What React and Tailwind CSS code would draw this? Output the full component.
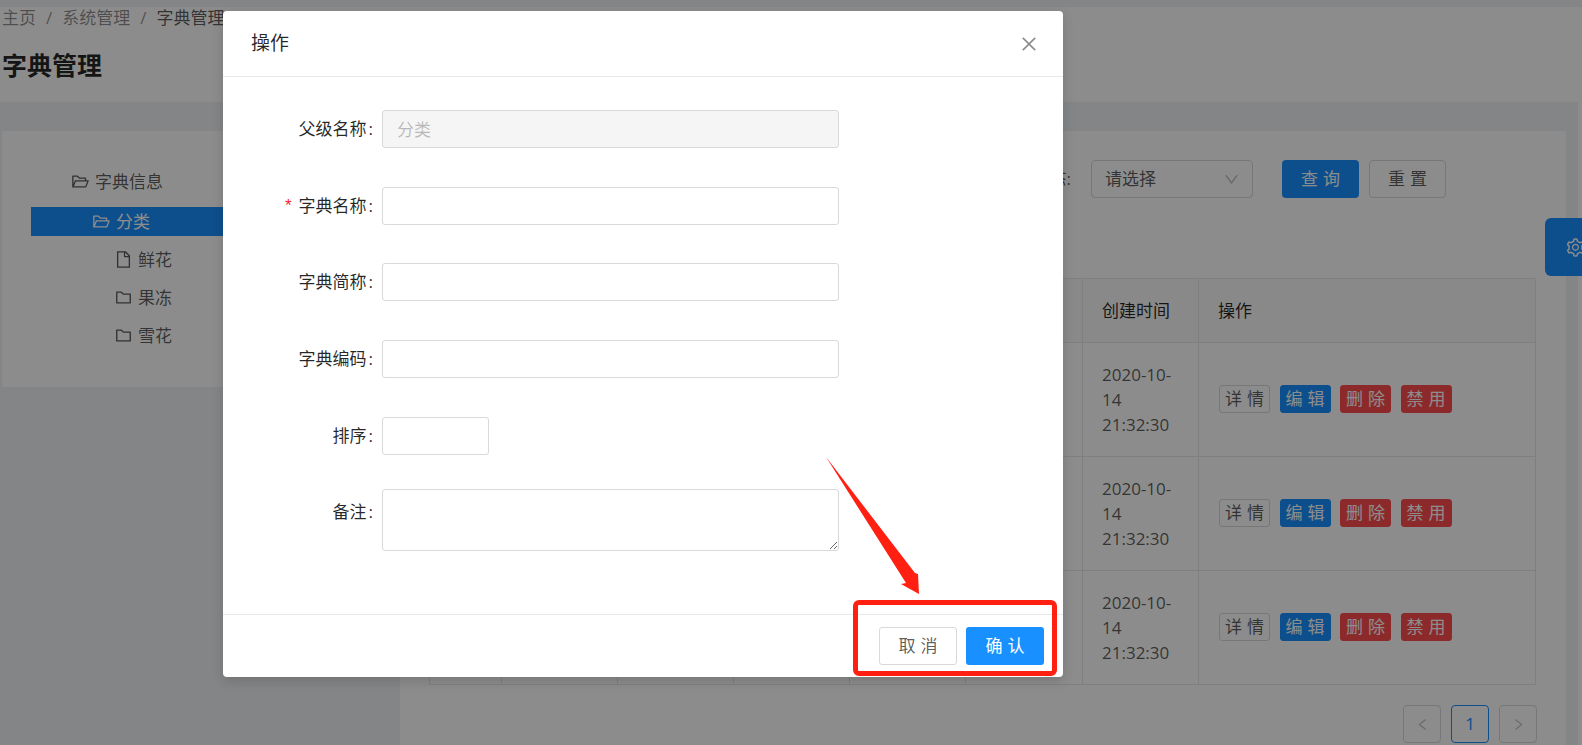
import React from 'react';
import {
  AiOutlineClose,
  AiOutlineDown,
  AiOutlineFile,
  AiOutlineFolder,
  AiOutlineFolderOpen,
  AiOutlineLeft,
  AiOutlineRight,
  AiOutlineSetting,
} from 'react-icons/ai';

const rows = [1, 2, 3];

const Spaced = ({ children }) => (
  <span className="tracking-[0.3em] -mr-[0.3em]">{children}</span>
);

const ActionButton = ({ label, className }) => (
  <button className={`flex h-[28px] w-[51px] items-center justify-center rounded-[3px] border ${className}`}>
    <Spaced>{label}</Spaced>
  </button>
);

const TreeRow = ({ icon, label, className = '' }) => (
  <div className={`flex h-[29px] items-center gap-[5px] ${className}`}>
    {icon}
    <span>{label}</span>
  </div>
);

const FormRow = ({ label, required, className = '', labelClass = '', children }) => (
  <div className={`flex items-start ${className}`}>
    <label className={`flex h-[38px] w-[159px] items-center justify-end text-black/85 ${labelClass}`}>
      {required && (
        <span className="mr-[5px] mt-[3px] text-[17px] text-[#f5222d] [font-family:'Liberation_Mono',monospace]">*</span>
      )}
      {label}
      <span className="ml-[2px] mr-[9px]">:</span>
    </label>
    {children}
  </div>
);

const inputBase = 'h-[38px] rounded-[3px] border border-[#d9d9d9] px-[14px] pb-[2px] outline-none';

const App = () => {
  return (
    <div className="relative h-[745px] w-[1582px] overflow-hidden bg-[#f0f2f5] text-[17px] text-black/65 [font-family:'Open_Sans','Noto_Sans_CJK_SC',sans-serif]">
      {/* page header */}
      <div className="mt-[7px] h-[95px] bg-white pl-[2px] pt-[1px]">
        <div className="flex h-[20px] items-center text-black/45">
          <span>主页</span>
          <span className="mx-[10px]">/</span>
          <span>系统管理</span>
          <span className="mx-[10px]">/</span>
          <span className="text-black/65">字典管理</span>
        </div>
        <h1 className="mt-[20px] text-[25px] font-semibold leading-[34px] text-black/85">字典管理</h1>
      </div>

      <div className="flex h-[643px]">
        {/* tree */}
        <div className="w-[400px] pl-[2px] pt-[29px]">
          <div className="flex h-[256px] w-[388px] flex-col gap-[9px] bg-white pl-[29px] pt-[36px]">
            <TreeRow className="mb-[2px] pl-[40px]" icon={<AiOutlineFolderOpen className="text-[19px]" />} label="字典信息" />
            <TreeRow className="bg-[#1890ff] pl-[61px] text-white" icon={<AiOutlineFolderOpen className="text-[19px]" />} label="分类" />
            <TreeRow className="pl-[83px]" icon={<AiOutlineFile className="text-[19px]" />} label="鲜花" />
            <TreeRow className="pl-[83px]" icon={<AiOutlineFolder className="text-[19px]" />} label="果冻" />
            <TreeRow className="pl-[83px]" icon={<AiOutlineFolder className="text-[19px]" />} label="雪花" />
          </div>
        </div>

        {/* list */}
        <div className="mt-[29px] h-[614px] w-[1166px] bg-white pl-[29px] pt-[29px]">
          <div className="flex h-[38px] items-center justify-end pr-[120px]">
            <span>状态:</span>
            <div className="ml-[20px] flex h-[38px] w-[162px] items-center justify-between rounded-[4px] border border-[#d9d9d9] pl-[13px] pr-[12px]">
              <span>请选择</span>
              <AiOutlineDown className="text-[17px] text-black/25" />
            </div>
            <button className="ml-[29px] flex h-[38px] w-[77px] items-center justify-center rounded-[4px] bg-[#1890ff] text-white">
              <Spaced>查询</Spaced>
            </button>
            <button className="ml-[10px] flex h-[38px] w-[77px] items-center justify-center rounded-[4px] border border-[#d9d9d9]">
              <Spaced>重置</Spaced>
            </button>
          </div>

          <table className="mt-[80px] w-[1106px] table-fixed border-collapse">
            <colgroup>
              <col className="w-[72px]" />
              <col className="w-[116px]" />
              <col className="w-[116px]" />
              <col className="w-[116px]" />
              <col className="w-[116px]" />
              <col className="w-[117px]" />
              <col className="w-[116px]" />
              <col className="w-[337px]" />
            </colgroup>
            <thead className="bg-[#fafafa] text-black/85">
              <tr className="h-[64px]">
                <th className="border border-[#e8e8e8]" />
                <th className="border border-[#e8e8e8]" />
                <th className="border border-[#e8e8e8]" />
                <th className="border border-[#e8e8e8]" />
                <th className="border border-[#e8e8e8]" />
                <th className="border border-[#e8e8e8]" />
                <th className="border border-[#e8e8e8] px-[19px] text-left font-normal">创建时间</th>
                <th className="border border-[#e8e8e8] px-[19px] text-left font-normal">操作</th>
              </tr>
            </thead>
            <tbody>
              {rows.map((row) => (
                <tr key={row} className="h-[114px]">
                  <td className="border border-[#e8e8e8]" />
                  <td className="border border-[#e8e8e8]" />
                  <td className="border border-[#e8e8e8]" />
                  <td className="border border-[#e8e8e8]" />
                  <td className="border border-[#e8e8e8]" />
                  <td className="border border-[#e8e8e8]" />
                  <td className="border border-[#e8e8e8] px-[19px] leading-[25px]">2020-10-14 21:32:30</td>
                  <td className="border border-[#e8e8e8] px-[19px]">
                    <div className="-mt-[2px] ml-[1px] flex gap-[9.5px]">
                      <ActionButton label="详情" className="border-[#d9d9d9]" />
                      <ActionButton label="编辑" className="border-[#1890ff] bg-[#1890ff] text-white" />
                      <ActionButton label="删除" className="border-[#ff4d4f] bg-[#ff4d4f] text-white" />
                      <ActionButton label="禁用" className="border-[#ff4d4f] bg-[#ff4d4f] text-white" />
                    </div>
                  </td>
                </tr>
              ))}
            </tbody>
          </table>

          <div className="mt-[20px] flex w-[1108px] justify-end gap-[10px]">
            <div className="flex size-[38px] items-center justify-center rounded-[4px] border border-[#d9d9d9] text-black/25">
              <AiOutlineLeft className="text-[15px]" />
            </div>
            <div className="flex size-[38px] items-center justify-center rounded-[4px] border border-[#1890ff] text-[#1890ff]">1</div>
            <div className="flex size-[38px] items-center justify-center rounded-[4px] border border-[#d9d9d9] text-black/25">
              <AiOutlineRight className="text-[15px]" />
            </div>
          </div>
        </div>

        <div className="ml-[12px] w-[4px] bg-white" />
      </div>

      {/* settings tab */}
      <div className="absolute left-[1545px] top-[218px] flex h-[58px] w-[37px] items-center overflow-hidden rounded-l-[6px] bg-[#1890ff] pl-[20px] text-white">
        <AiOutlineSetting className="shrink-0 text-[21px]" />
      </div>

      {/* mask */}
      <div className="absolute inset-0 bg-black/45" />

      {/* modal */}
      <div className="absolute left-[223px] top-[11px] flex h-[666px] w-[840px] flex-col rounded-[4px] bg-white shadow-[0_4px_12px_rgba(0,0,0,0.15)]">
        <div className="flex h-[66px] shrink-0 items-center justify-between border-b border-[#e8e8e8] pl-[28px] pr-[24px]">
          <span className="text-[19px] text-black/85">操作</span>
          <AiOutlineClose className="text-[20px] text-black/45" />
        </div>

        <div className="flex-1 pt-[33px]">
          <FormRow label="父级名称" className="mb-[38.6px]">
            <input disabled value="分类" readOnly className={`${inputBase} w-[457px] bg-[#f5f5f5] text-black/25`} />
          </FormRow>
          <FormRow label="字典名称" required className="mb-[38.6px]">
            <input className={`${inputBase} w-[457px] bg-white`} />
          </FormRow>
          <FormRow label="字典简称" className="mb-[38.6px]">
            <input className={`${inputBase} w-[457px] bg-white`} />
          </FormRow>
          <FormRow label="字典编码" className="mb-[39.4px]">
            <input className={`${inputBase} w-[457px] bg-white`} />
          </FormRow>
          <FormRow label="排序" className="mb-[33.8px]">
            <input className={`${inputBase} w-[107px] bg-white`} />
          </FormRow>
          <FormRow label="备注" labelClass="pt-[8px]">
            <textarea className="h-[62px] w-[457px] rounded-[3px] border border-[#d9d9d9] px-[14px] outline-none" />
          </FormRow>
        </div>

        <div className="flex h-[63px] shrink-0 items-center justify-end gap-[9px] border-t border-[#e8e8e8] pb-[1px] pr-[19px]">
          <button className="flex h-[38px] w-[78px] items-center justify-center rounded-[3px] border border-[#d9d9d9]">
            <Spaced>取消</Spaced>
          </button>
          <button className="flex h-[38px] w-[78px] items-center justify-center rounded-[3px] bg-[#1890ff] text-white">
            <Spaced>确认</Spaced>
          </button>
        </div>
      </div>

      {/* red annotation on top of the screenshot */}
      <svg className="absolute left-[820px] top-[450px]" width="110" height="150" viewBox="820 450 110 150">
        <polygon points="826,457 915,573 918,574 919,594 901,584 906,583" fill="#ff2012" />
      </svg>
      <div className="absolute left-[853px] top-[600px] h-[76px] w-[204px] rounded-[6px] border-[5px] border-[#ff2012]" />
    </div>
  );
};

export default App;
